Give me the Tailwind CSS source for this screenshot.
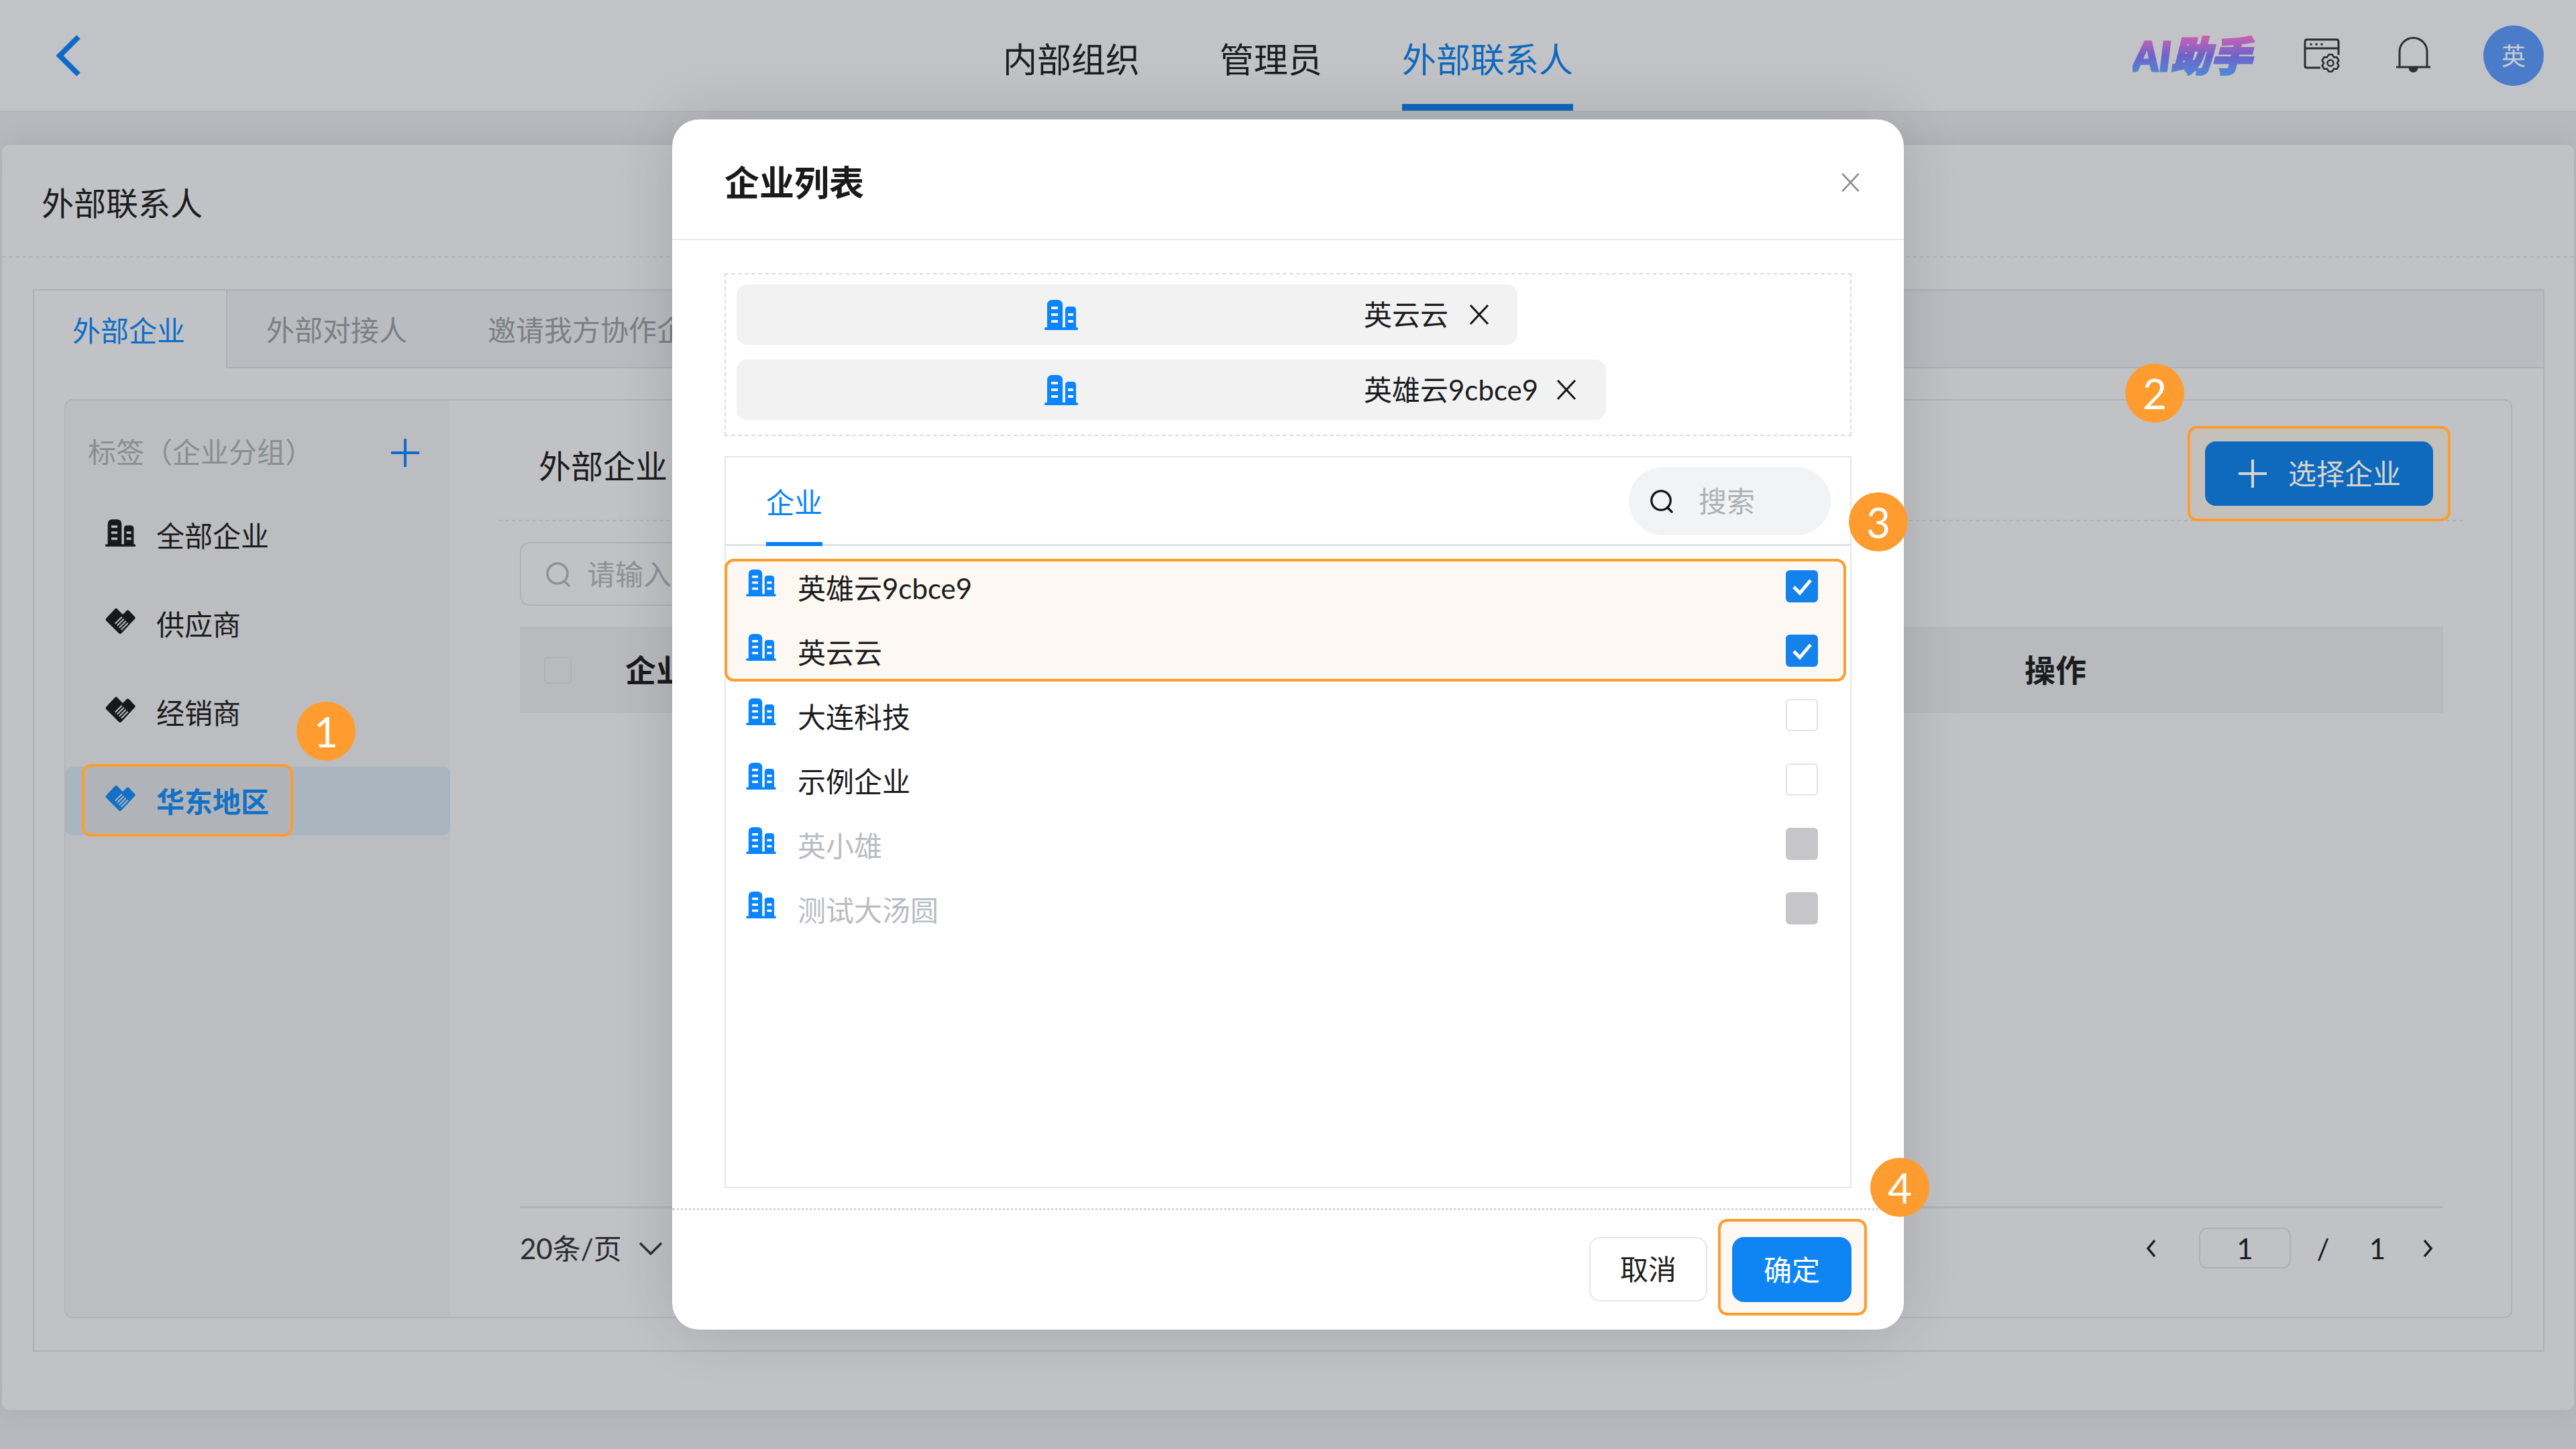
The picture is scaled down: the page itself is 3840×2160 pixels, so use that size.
<!DOCTYPE html>
<html lang="zh-CN">
<head>
  <meta charset="UTF-8">
  <title>外部联系人</title>
  <script src="https://cdn.jsdelivr.net/npm/@tailwindcss/browser@4"></script>
</head>
<body class="relative w-[3840px] h-[2160px] overflow-hidden bg-[#b6b9bd] text-[42px] leading-none text-[#1b1c1e] [font-family:Lato,'Noto_Sans_CJK_SC',sans-serif]">

  <!-- shared icons -->
  <svg class="hidden">
    <symbol id="building" viewBox="0 0 50 45">
      <path fill="currentColor" fill-rule="evenodd" d="M4 42V8Q4 0 12 0H19Q27 0 27 8V42ZM10 10v4h10v-4ZM10 20v4h10v-4ZM10 30v4h10v-4Z"/>
      <path fill="currentColor" fill-rule="evenodd" d="M31 42V15Q31 10 36 10H42Q47 10 47 15V42ZM35 20v4h8v-4ZM35 30v4h8v-4Z"/>
      <rect fill="currentColor" y="41" width="50" height="4" rx="1.5"/>
    </symbol>
    <symbol id="deal" viewBox="0 0 45 40">
      <path fill="currentColor" fill-rule="evenodd" d="M14.5 1.5Q16 0 17.5 1.5L26 10L31.500 4.500Q33.500 2.500 35.500 4.500L44 13.500Q45.500 15 44 16.500L24 38Q22 40 20 38L1 19Q0 17.500 1 16ZM14 23l1.400 1.400l10-10l-1.400-1.400ZM17 26l1.400 1.400l10-10l-1.400-1.400ZM20 29l1.400 1.400l10-10l-1.400-1.400ZM23 32l1.400 1.400l10-10l-1.400-1.400Z"/>
    </symbol>
    <symbol id="cross" viewBox="0 0 30 32">
      <path d="M2 2L28 30M28 2L2 30" fill="none" stroke="currentColor" stroke-width="3"/>
    </symbol>
    <symbol id="search" viewBox="0 0 38 38">
      <circle cx="18" cy="18" r="15" fill="none" stroke="currentColor" stroke-width="3.500"/>
      <path d="M28 29L35 36" fill="none" stroke="currentColor" stroke-width="3.500" stroke-linecap="round"/>
    </symbol>
    <symbol id="check" viewBox="0 0 48 48">
      <path d="M12 25L21 34L37 15" fill="none" stroke="#fff" stroke-width="5"/>
    </symbol>
  </svg>

  <!-- top bar -->
  <header class="flex items-center justify-between h-[167px] bg-[#c2c3c6] border-b-2 border-[#b3b5b9]">
    <div class="flex items-center w-[1200px] pl-[83px]">
      <svg class="w-[38px] h-[62px] text-[#0d6ac9]" viewBox="0 0 38 62"><path d="M34 3L6 31L34 59" fill="none" stroke="currentColor" stroke-width="8"/></svg>
    </div>
    <nav class="flex h-full gap-[119px] text-[51px] text-[#1c1d1f]">
      <a class="flex items-center pt-[21px] border-b-[10px] border-transparent">内部组织</a>
      <a class="flex items-center pt-[21px] border-b-[10px] border-transparent">管理员</a>
      <a class="flex items-center pt-[21px] border-b-[10px] border-[#0f69bd] text-[#0f69bd]">外部联系人</a>
    </nav>
    <div class="flex items-center justify-end w-[1200px] pr-[48px]">
      <span class="pr-[6px] bg-linear-to-b from-[#cf5cb2] via-[#6c62c9] to-[#4a8ad4] bg-clip-text text-transparent italic font-black text-[60px] [-webkit-text-stroke:3px_transparent]">AI助手</span>
      <svg class="w-[54px] h-[52px] ml-[72px] text-[#2b2d30]" viewBox="0 0 54 52" fill="none" stroke="currentColor" stroke-width="3">
        <path d="M25 44H5Q2 44 2 41V5Q2 2 5 2H49Q52 2 52 5V25M2 15H52"/>
        <circle cx="11" cy="9" r="1.800" fill="currentColor" stroke="none"/>
        <circle cx="19" cy="9" r="1.800" fill="currentColor" stroke="none"/>
        <circle cx="27" cy="9" r="1.800" fill="currentColor" stroke="none"/>
        <path stroke-width="2.600" stroke-linejoin="round" d="M37.300 24.300H42.700L45 28.340L49.660 28.300L52.360 32.980L50 37L52.360 41.020L49.660 45.700L45 45.660L42.700 49.700H37.300L35 45.660L30.340 45.700L27.640 41.020L30 37L27.640 32.980L30.340 28.300L35 28.340Z"/>
        <circle cx="40" cy="37" r="4.500" stroke-width="2.600"/>
      </svg>
      <svg class="w-[55px] h-[55px] ml-[82px] text-[#2d2f33]" viewBox="0 0 55 55" fill="none" stroke="currentColor" stroke-width="3">
        <path d="M2 45H53M7 45V22A20.500 20.500 0 0 1 48 22V45"/>
        <path d="M22 46A5.500 5.500 0 0 0 33 46Z" fill="currentColor"/>
      </svg>
      <span class="flex items-center justify-center w-[90px] h-[90px] ml-[77px] rounded-full bg-[#4a7cc9] text-[#c9cbd0] text-[36px]">英</span>
    </div>
  </header>

  <!-- page behind the dialog -->
  <main class="flex flex-col h-[1886px] mx-[3px] mt-[49px] rounded-[10px] bg-[#c1c2c5] shadow-[0_0_40px_rgba(0,0,0,0.08)]">
    <div class="flex items-center h-[168px] pl-[59px] pt-[8px] text-[48px] border-b-2 border-dashed border-[#b0b3b8]">外部联系人</div>

    <div class="flex flex-col h-[1584px] mt-[47px] ml-[46px] mr-[44px] border-2 border-[#adb0b7]">
      <div class="flex h-[116px] shrink-0">
        <div class="flex items-center w-[288px] pl-[57px] pt-[4px] border-r-2 border-[#adb0b7] text-[#0f6cc8]">外部企业</div>
        <div class="flex flex-1 items-center gap-[120px] pl-[58px] pt-[4px] bg-[#b9bcc1] border-b-2 border-[#adb0b7] text-[#7d7f83]">
          <span>外部对接人</span>
          <span>邀请我方协作企业</span>
        </div>
      </div>

      <div class="flex h-[1370px] mt-[46px] ml-[45px] mr-[46px] rounded-[12px] border-2 border-[#b0b3b9] overflow-hidden">
        <!-- tag sidebar -->
        <aside class="w-[573px] shrink-0 bg-[#bcbdc0]">
          <div class="flex items-center justify-between h-[150px] pl-[33px] pr-[46px] pt-[3px] text-[#8b8d91]">
            <span>标签（企业分组）</span>
            <svg class="w-[42px] h-[42px] mt-[3px] text-[#0f6cc8]" viewBox="0 0 42 42"><path d="M21 0V42M0 21H42" stroke="currentColor" stroke-width="4"/></svg>
          </div>
          <div class="flex flex-col gap-[30px]">
            <div class="flex items-center h-[102px] pl-[59px] pt-[2px]">
              <svg class="w-[45px] h-[41px] mb-[10px] text-[#17181a]"><use href="#building"/></svg>
              <span class="ml-[31px]">全部企业</span>
            </div>
            <div class="flex items-center h-[102px] pl-[59px] pt-[2px]">
              <svg class="w-[45px] h-[40px] mb-[10px] text-[#17181a]"><use href="#deal"/></svg>
              <span class="ml-[31px]">供应商</span>
            </div>
            <div class="flex items-center h-[102px] pl-[59px] pt-[2px]">
              <svg class="w-[45px] h-[40px] mb-[10px] text-[#17181a]"><use href="#deal"/></svg>
              <span class="ml-[31px]">经销商</span>
            </div>
            <div class="relative flex items-center h-[102px] pl-[59px] pt-[2px] rounded-[10px] bg-[#a9b5bf] text-[#1270c6] font-bold">
              <div class="absolute left-[24px] top-[-4px] w-[315px] h-[108px] rounded-[14px] border-4 border-[#ff9c30] bg-[#b0b4b8]"></div>
              <svg class="relative w-[45px] h-[40px] mb-[10px]"><use href="#deal"/></svg>
              <span class="relative ml-[31px]">华东地区</span>
            </div>
          </div>
        </aside>

        <!-- enterprise table -->
        <section class="flex flex-col flex-1 pl-[72px] pr-[71px]">
          <div class="flex items-end justify-between h-[180px] pr-[19px] border-b-2 border-dashed border-[#b0b3b8]">
            <span class="mb-[56px] ml-[60px] text-[48px]">外部企业</span>
            <div class="flex items-center justify-center w-[392px] h-[142px] mb-[-2px] rounded-[14px] border-4 border-[#ff9c30] bg-[#c4c1bc]">
              <button class="flex items-center w-[340px] h-[96px] pl-[50px] rounded-[16px] bg-[#0f69bd] text-[#d8d5cf]">
                <svg class="w-[42px] h-[42px]" viewBox="0 0 42 42"><path d="M21 0V42M0 21H42" stroke="currentColor" stroke-width="4"/></svg>
                <span class="ml-[32px]">选择企业</span>
              </button>
            </div>
          </div>
          <div class="flex flex-col flex-1 pl-[32px] pr-[30px]">
            <div class="flex items-center w-[500px] h-[95px] mt-[31px] pl-[36px] rounded-[14px] border-2 border-[#aeb1b8] text-[#8f9195]">
              <svg class="w-[38px] h-[38px]"><use href="#search"/></svg>
              <span class="ml-[24px]">请输入关键词</span>
            </div>
            <div class="flex items-center h-[129px] mt-[31px] pl-[36px] bg-[#b8babe] font-bold text-[46px]">
              <span class="w-[41px] h-[40px] rounded-[6px] border-2 border-[#aeb2b8]"></span>
              <span class="ml-[80px]">企业名称</span>
              <span class="ml-auto mr-[532px]">操作</span>
            </div>
            <div class="flex-1"></div>
            <div class="flex items-center h-[165px] pb-[43px] border-t-[3px] border-[#aeb4bd]">
              <span class="text-[#2b2c2f]">20条/页</span>
              <svg class="w-[36px] h-[20px] ml-[25px] text-[#2f3033]" viewBox="0 0 36 20"><path d="M2 2L18 18L34 2" fill="none" stroke="currentColor" stroke-width="3.500"/></svg>
              <svg class="w-[16px] h-[28px] ml-auto text-[#1c1d1f]" viewBox="0 0 16 28"><path d="M13 2L3 14L13 26" fill="none" stroke="currentColor" stroke-width="3.500"/></svg>
              <span class="flex items-center justify-center w-[137px] h-[61px] ml-[63px] rounded-[12px] border-2 border-[#aeb1b8]">1</span>
              <span class="w-[96px] text-center">/</span>
              <span class="w-[66px] text-center">1</span>
              <svg class="w-[16px] h-[28px] ml-[34px] mr-[15px] text-[#1c1d1f]" viewBox="0 0 16 28"><path d="M3 2L13 14L3 26" fill="none" stroke="currentColor" stroke-width="3.500"/></svg>
            </div>
          </div>
        </section>
      </div>
    </div>
  </main>

  <!-- dialog -->
  <div class="absolute left-[1002px] top-[178px] flex flex-col w-[1836px] h-[1804px] rounded-[40px] bg-white shadow-[0_0_90px_rgba(0,0,0,0.14)]">
    <div class="flex items-center justify-between h-[180px] shrink-0 pl-[78px] pr-[65px] pt-[10px] border-b-2 border-[#e8eaee]">
      <h2 class="text-[52px] font-bold text-[#1a1a1a]">企业列表</h2>
      <svg class="w-[29px] h-[30px] text-[#8c8e92]"><use href="#cross"/></svg>
    </div>

    <div class="flex flex-col gap-[22px] h-[243px] mt-[49px] mx-[78px] pl-[16px] pt-[15px] border-2 border-dashed border-[#dcdde0]">
      <div class="flex items-center w-fit h-[90px] pl-[459px] pr-[42px] rounded-[16px] bg-[#f2f2f3]">
        <svg class="w-[50px] h-[45px] text-[#0a84ff]"><use href="#building"/></svg>
        <span class="ml-[426px]">英云云</span>
        <svg class="w-[30px] h-[32px] ml-[31px] text-[#141517]"><use href="#cross"/></svg>
      </div>
      <div class="flex items-center w-fit h-[90px] pl-[459px] pr-[44px] rounded-[16px] bg-[#f2f2f3]">
        <svg class="w-[50px] h-[45px] text-[#0a84ff]"><use href="#building"/></svg>
        <span class="ml-[426px]">英雄云9cbce9</span>
        <svg class="w-[30px] h-[32px] ml-[27px] text-[#141517]"><use href="#cross"/></svg>
      </div>
    </div>

    <div class="flex flex-col h-[1091px] mt-[30px] mx-[78px] border-2 border-[#e6e7ea]">
      <div class="flex items-center justify-between h-[132px] shrink-0 pl-[60px] pr-[29px] border-b-[3px] border-[#dfe3e8]">
        <span class="relative flex items-center h-full pt-[4px] text-[#0a84ff]">
          企业
          <span class="absolute left-0 right-0 bottom-[-3px] h-[6px] bg-[#0a7ff5]"></span>
        </span>
        <div class="flex items-center w-[301px] h-[102px] pl-[31px] rounded-full bg-[#f2f3f5] text-[#aeb0b4]">
          <svg class="w-[36px] h-[38px] text-[#141517]"><use href="#search"/></svg>
          <span class="ml-[37px]">搜索</span>
        </div>
      </div>

      <div class="relative flex flex-col pt-[15px]">
        <div class="absolute left-[-2px] top-[19px] w-[1672px] h-[183px] rounded-[14px] border-4 border-[#ff9c30] bg-[#fdf8f2]"></div>
        <div class="relative flex items-center h-[96px] pl-[30px] pr-[48px]">
          <svg class="w-[45px] h-[40px] mb-[16px] text-[#0a84ff]"><use href="#building"/></svg>
          <span class="ml-[32px]">英雄云9cbce9</span>
          <svg class="w-[48px] h-[48px] ml-auto mb-[6px] rounded-[6px] bg-[#1582ec]"><use href="#check"/></svg>
        </div>
        <div class="relative flex items-center h-[96px] pl-[30px] pr-[48px]">
          <svg class="w-[45px] h-[40px] mb-[16px] text-[#0a84ff]"><use href="#building"/></svg>
          <span class="ml-[32px]">英云云</span>
          <svg class="w-[48px] h-[48px] ml-auto mb-[6px] rounded-[6px] bg-[#1582ec]"><use href="#check"/></svg>
        </div>
        <div class="flex items-center h-[96px] pl-[30px] pr-[48px]">
          <svg class="w-[45px] h-[40px] mb-[16px] text-[#0a84ff]"><use href="#building"/></svg>
          <span class="ml-[32px]">大连科技</span>
          <span class="w-[48px] h-[48px] ml-auto mb-[6px] rounded-[6px] border-2 border-[#e2e3e6]"></span>
        </div>
        <div class="flex items-center h-[96px] pl-[30px] pr-[48px]">
          <svg class="w-[45px] h-[40px] mb-[16px] text-[#0a84ff]"><use href="#building"/></svg>
          <span class="ml-[32px]">示例企业</span>
          <span class="w-[48px] h-[48px] ml-auto mb-[6px] rounded-[6px] border-2 border-[#e2e3e6]"></span>
        </div>
        <div class="flex items-center h-[96px] pl-[30px] pr-[48px] text-[#b9bcc2]">
          <svg class="w-[45px] h-[40px] mb-[16px] text-[#0a84ff]"><use href="#building"/></svg>
          <span class="ml-[32px]">英小雄</span>
          <span class="w-[48px] h-[48px] ml-auto mb-[6px] rounded-[6px] bg-[#c6c6c8]"></span>
        </div>
        <div class="flex items-center h-[96px] pl-[30px] pr-[48px] text-[#b9bcc2]">
          <svg class="w-[45px] h-[40px] mb-[16px] text-[#0a84ff]"><use href="#building"/></svg>
          <span class="ml-[32px]">测试大汤圆</span>
          <span class="w-[48px] h-[48px] ml-auto mb-[6px] rounded-[6px] bg-[#c6c6c8]"></span>
        </div>
      </div>
    </div>

    <div class="flex justify-end items-start flex-1 mt-[30px] pt-[13px] pr-[55px] border-t-[3px] border-dotted border-[#d5d6d8]">
      <button class="w-[176px] h-[96px] mt-[27px] mr-[16px] rounded-[16px] border-2 border-[#e6e7ea] bg-white text-[#1e1f21]">取消</button>
      <div class="w-[222px] h-[144px] pl-[17px] pt-[23px] rounded-[14px] border-4 border-[#ff9c30] bg-[#fdf8f2]">
        <button class="w-[178px] h-[97px] rounded-[18px] bg-[#0e85f3] text-white">确定</button>
      </div>
    </div>
  </div>

  <!-- numbered callouts -->
  <span class="absolute left-[442px] top-[1046px] flex items-center justify-center w-[88px] h-[88px] rounded-full bg-[#ff9c30] text-white text-[62px]">1</span>
  <span class="absolute left-[3168px] top-[542px] flex items-center justify-center w-[88px] h-[88px] rounded-full bg-[#ff9c30] text-white text-[62px]">2</span>
  <span class="absolute left-[2756px] top-[734px] flex items-center justify-center w-[88px] h-[88px] rounded-full bg-[#ff9c30] text-white text-[62px]">3</span>
  <span class="absolute left-[2788px] top-[1726px] flex items-center justify-center w-[88px] h-[88px] rounded-full bg-[#ff9c30] text-white text-[62px]">4</span>
</body>
</html>
